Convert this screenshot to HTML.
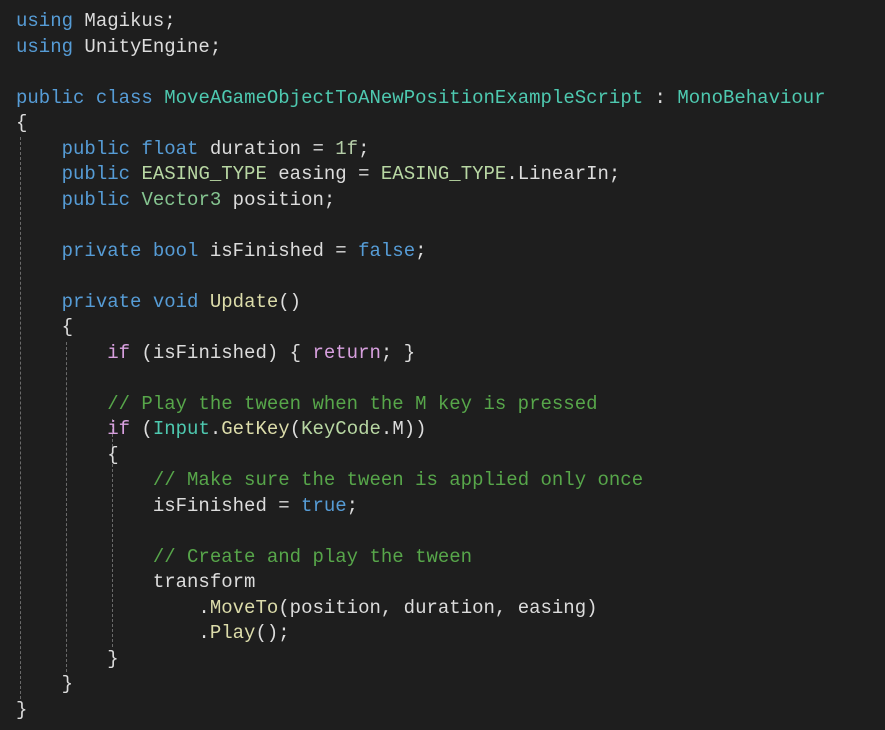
<!DOCTYPE html><html><head><style>
body{margin:0;background:#1e1e1e;width:885px;height:730px;overflow:hidden;position:relative}
pre{margin:0;position:absolute;left:16px;top:9px;font-family:"Liberation Mono",monospace;font-size:19px;line-height:25.5px;color:#dcdcdc}
.k{color:#569cd6}.t{color:#4ec9b0}.c{color:#57a64a}.m{color:#dcdcaa}.n{color:#b5cea8}.p{color:#d8a0df}.e{color:#b8d7a3}.s{color:#86c691}
.g{position:absolute;width:0;border-left:1px dashed #6a6a6a}
</style></head><body>
<div class="g" style="left:20px;top:137px;height:562px"></div>
<div class="g" style="left:66px;top:342px;height:330px"></div>
<div class="g" style="left:112px;top:419px;height:228px"></div>
<pre><span class="k">using</span> Magikus;
<span class="k">using</span> UnityEngine;

<span class="k">public</span> <span class="k">class</span> <span class="t">MoveAGameObjectToANewPositionExampleScript</span> : <span class="t">MonoBehaviour</span>
{
    <span class="k">public</span> <span class="k">float</span> duration = <span class="n">1f</span>;
    <span class="k">public</span> <span class="e">EASING_TYPE</span> easing = <span class="e">EASING_TYPE</span>.LinearIn;
    <span class="k">public</span> <span class="s">Vector3</span> position;

    <span class="k">private</span> <span class="k">bool</span> isFinished = <span class="k">false</span>;

    <span class="k">private</span> <span class="k">void</span> <span class="m">Update</span>()
    {
        <span class="p">if</span> (isFinished) { <span class="p">return</span>; }

        <span class="c">// Play the tween when the M key is pressed</span>
        <span class="p">if</span> (<span class="t">Input</span>.<span class="m">GetKey</span>(<span class="e">KeyCode</span>.M))
        {
            <span class="c">// Make sure the tween is applied only once</span>
            isFinished = <span class="k">true</span>;

            <span class="c">// Create and play the tween</span>
            transform
                .<span class="m">MoveTo</span>(position, duration, easing)
                .<span class="m">Play</span>();
        }
    }
}</pre>
</body></html>
